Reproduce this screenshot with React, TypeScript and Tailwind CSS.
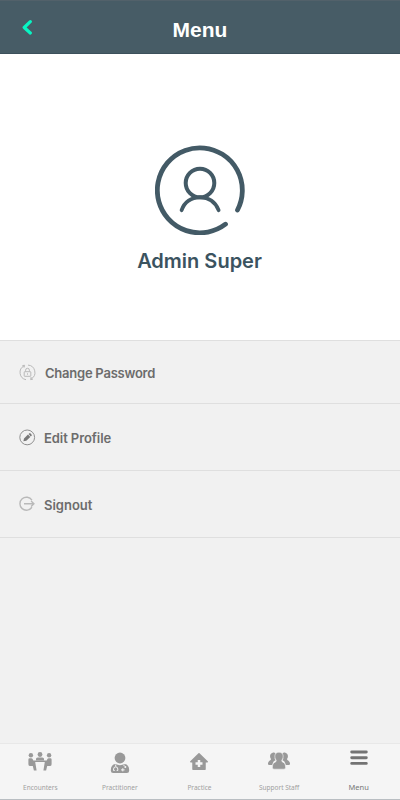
import type { ReactNode } from 'react'

interface RowProps {
  icon: ReactNode
  label: string
  className: string
}

interface TabProps {
  icon: ReactNode
  label: string
  className?: string
}

function AvatarIcon() {
  return (
    <svg width="90" height="90" viewBox="0 0 90 90" fill="none" stroke="#435a66" strokeLinecap="round">
      <path d="M82.5 65A42.5 42.5 0 1 0 70.5 79.2" strokeWidth="4.8" />
      <circle cx="45" cy="38" r="14.3" strokeWidth="4" />
      <path d="M26.6 65.2C29.5 57 36.5 52.3 45 52.3S60.5 57 63.6 65.2" strokeWidth="3.8" />
    </svg>
  )
}

function PasswordIcon() {
  return (
    <svg width="17" height="17" viewBox="0 0 17 17" fill="none" stroke="#b9b9b9" strokeWidth="1">
      <path d="M7 15.7A7.4 7.4 0 0 1 5 1.9M9 1.1a7.4 7.4 0 0 1 3.2 13.8" />
      <path d="M3.4 1.6 5.6 1.3 5 3.6M13.9 15.2l-2.3.4.6-2.6" />
      <rect x="5.2" y="7.7" width="6.6" height="4.6" rx=".4" />
      <path d="M6.6 7.5V6.2a1.9 1.9 0 0 1 3.8 0v1.3M8.5 9.3v1.4" />
    </svg>
  )
}

function EditIcon() {
  return (
    <svg width="17" height="17" viewBox="0 0 17 17">
      <circle cx="8.2" cy="8.4" r="7.4" fill="none" stroke="#8f8f8f" strokeWidth="1" />
      <path d="M4.4 12.3 5 9.4 9 5.6l2.3 2.3-4 3.9zM9.6 5.1l.9-.9q.4-.3.8.1l1.4 1.4q.4.4 0 .8l-.9.9z" fill="#777" />
    </svg>
  )
}

function SignoutIcon() {
  return (
    <svg width="17" height="17" viewBox="0 0 17 17" fill="none" stroke="#b9b9b9" strokeWidth="1.4">
      <path d="M12.9 4.2A6.5 6.5 0 1 0 12.9 11.2M5 7.7h9.8M12.1 5l2.8 2.7-2.8 2.7" />
    </svg>
  )
}

function EncountersIcon() {
  return (
    <svg width="24" height="20" viewBox="0 0 24 20" fill="#999">
      <circle cx="2.9" cy="3.3" r="2.2" />
      <circle cx="12" cy="2.5" r="2.4" />
      <circle cx="21.1" cy="3.3" r="2.2" />
      <path d="M8 8.6V7q0-1.6 1.6-1.6h4.8Q16 5.4 16 7v1.6z" />
      <path d="M.4 7.4Q.4 6.2 1.6 6.2h1.6q1 0 1.4.9L5.3 8.4h13.4l.7-1.3q.4-.9 1.4-.9h1.6q1.2 0 1.2 1.2v4.8q0 1.9-1.9 1.9h-2.5L18.1 18.4h-2.7L16.8 10H7.2l1.4 8.4H5.9L4.8 14.1H2.3Q.4 14.1.4 12.2z" />
    </svg>
  )
}

function PractitionerIcon() {
  return (
    <svg width="20" height="22" viewBox="0 0 20 22" fill="#999">
      <circle cx="10" cy="6" r="5.4" />
      <path d="M5.4 12.1q4.6 2.2 9.2 0 4.6.6 4.6 6.3 0 2.5-2.4 2.5H3.2Q.8 20.9.8 18.4.8 12.7 5.4 12.1z" />
      <path d="M5.7 12.6v2M3.6 18.5V17a2.1 2.1 0 0 1 4.2 0v1.5H6.7M3.6 18.5h1.1M14 12.6v1.5M11 17.9h3.6M12.8 16.2v3.2" fill="none" stroke="#f5f5f5" strokeWidth="1" />
      <circle cx="15.3" cy="15.1" r="1" fill="#f5f5f5" />
    </svg>
  )
}

function PracticeIcon() {
  return (
    <svg width="20" height="20" viewBox="0 0 20 20">
      <path d="M10 1.7 18.2 9.8H16v7.4H4V9.8H1.8z" fill="#999" stroke="#999" strokeWidth="1.5" strokeLinejoin="round" />
      <path d="M10 8v7M6.5 11.5h7" stroke="#f5f5f5" strokeWidth="2.5" />
    </svg>
  )
}

function StaffIcon() {
  return (
    <svg width="24" height="18" viewBox="0 0 24 18" fill="#999">
      <path d="M5.2 1c3-1.3 4 1 3.4 3.5-.3 1.2-1 1.8-.9 2.6l1 1.1c-2 .8-3 2-3.3 4.8H1.8Q.7 12.7 1.1 10.8C1.7 8.5 4 8.5 4 7 2.5 5 2.7 1.8 5.2 1z" />
      <path d="M18.8 1c-3-1.3-4 1-3.4 3.5.3 1.2 1 1.8.9 2.6l-1 1.1c2 .8 3 2 3.3 4.8h3.6q1.1-.3.7-2.2C22.3 8.5 20 8.5 20 7c1.5-2 1.3-5.2-1.2-6z" />
      <path d="M12 .2c3.6 0 4.7 2.8 3.9 6-.4 1.3-1.1 1.8-1.2 2.7.2 1.5 3.9 1 3.9 6.6q0 1.7-1.5 1.7H6.9q-1.5 0-1.5-1.7c0-5.6 3.7-5.1 3.9-6.6-.1-.9-.8-1.4-1.2-2.7-.8-3.2.3-6 3.9-6z" stroke="#f5f5f5" strokeWidth=".6" />
    </svg>
  )
}

function MenuIcon() {
  return (
    <svg width="18" height="16" viewBox="0 0 18 16" stroke="#737373" strokeWidth="2.9" strokeLinecap="round">
      <path d="M1.7 2h14.6M1.7 7.7h14.6M1.7 13.4h14.6" />
    </svg>
  )
}

function MenuRow({ icon, label, className }: RowProps) {
  return (
    <button className={`flex w-full items-center border-b border-[#dfdfdf] pl-[19px] text-left text-[13px] leading-4 font-semibold text-[#6c6c6c] ${className}`}>
      {icon}
      <span className="pt-[2px] whitespace-nowrap">{label}</span>
    </button>
  )
}

function Tab({ icon, label, className = 'pt-2 pb-[5px] text-[6.5px] text-[#a0a0a0]' }: TabProps) {
  return (
    <button className={`flex w-[79.6px] flex-col items-center justify-between ${className}`}>
      {icon}
      <span className="leading-3 whitespace-nowrap">{label}</span>
    </button>
  )
}

export default function App() {
  return (
    <div className="flex h-[800px] w-[400px] flex-col overflow-hidden bg-[#f1f1f1] font-['Inter',sans-serif]">
      <header className="grid h-[54px] shrink-0 grid-cols-[60px_1fr_60px] items-center border-t border-b border-t-[#52616a] border-b-[#3c505b] bg-[#475c66]">
        <button className="flex pl-[21px]" aria-label="Back">
          <svg width="12" height="16" viewBox="0 0 12 16" fill="none" stroke="#08f5c3" strokeWidth="3.2" strokeLinecap="round" strokeLinejoin="round">
            <path d="M9.3 2.7 3.2 8.5l6.1 5.5" />
          </svg>
        </button>
        <h1 className="pt-[6px] text-center font-['Liberation_Sans',sans-serif] text-[21px] leading-6 font-bold text-white">Menu</h1>
      </header>

      <section className="flex h-[286px] shrink-0 flex-col items-center bg-white pt-[91px]">
        <AvatarIcon />
        <h2 className="mt-[13px] -ml-px text-[20px] leading-[26px] font-semibold whitespace-nowrap text-[#3b535f]">Admin Super</h2>
      </section>

      <main className="flex-1 border-t border-[#dfdfdf]">
        <MenuRow icon={<PasswordIcon />} label="Change Password" className="h-[63px] gap-[9px] tracking-[-0.24px]" />
        <MenuRow icon={<EditIcon />} label="Edit Profile" className="h-[67px] gap-2 tracking-[-0.08px]" />
        <MenuRow icon={<SignoutIcon />} label="Signout" className="h-[67px] gap-2" />
      </main>

      <nav className="flex h-[57px] shrink-0 border-t border-b border-t-[#e8e8e8] border-b-[#b9bec2] bg-[#f5f5f5] pl-[0.5px] font-['Noto_Sans',sans-serif]">
        <Tab icon={<EncountersIcon />} label="Encounters" />
        <Tab icon={<PractitionerIcon />} label="Practitioner" />
        <Tab icon={<PracticeIcon />} label="Practice" />
        <Tab icon={<StaffIcon />} label="Support Staff" />
        <Tab icon={<MenuIcon />} label="Menu" className="pt-[6px] pb-[6px] text-[7.5px] text-[#777]" />
      </nav>
    </div>
  )
}
